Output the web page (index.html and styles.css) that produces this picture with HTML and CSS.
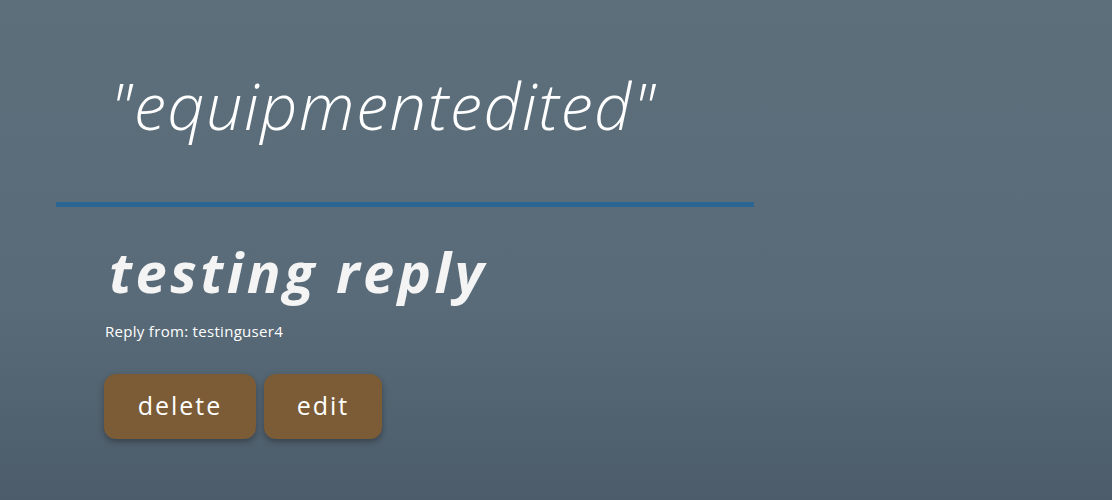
FILE: index.html
```html
<!DOCTYPE html>
<html>
<head>
<meta charset="utf-8">
<link rel="stylesheet" href="styles.css">
</head>
<body>
<main class="page">
  <h1 class="post-title">"equipmentedited"</h1>
  <hr class="divider">
  <section class="reply">
    <h2 class="reply-text">testing reply</h2>
    <p class="reply-meta">Reply from: testinguser4</p>
    <div class="actions">
      <button class="btn btn-delete">delete</button>
      <button class="btn btn-edit">edit</button>
    </div>
  </section>
</main>
</body>
</html>
```
FILE: styles.css
```css
html, body {
  margin: 0;
  height: 100%;
}
body {
  background: linear-gradient(to bottom, #5c6f7b 0%, #596b78 60%, #4c5c6a 100%);
  font-family: "Open Sans", "Liberation Sans", sans-serif;
  color: #fff;
}
.page {
  padding: 60px 0 0 56px;
}
.post-title {
  margin: 0 0 0 54px;
  font-size: 65px;
  font-weight: 300;
  font-style: italic;
  line-height: 90px;
  letter-spacing: 1.5px;
  color: #fff;
}
.divider {
  width: 698px;
  height: 5px;
  border: 0;
  margin: 52px 0 0 0;
  background: #2b6592;
}
.reply {
  padding-left: 48px;
}
.reply-text {
  margin: 28px 0 0 5px;
  font-size: 56px;
  font-weight: 700;
  font-style: italic;
  line-height: 72px;
  letter-spacing: 3.5px;
  color: #f4f4f4;
}
.reply-meta {
  margin: 14px 0 0 1px;
  font-size: 15px;
  line-height: 20px;
  letter-spacing: 0.3px;
  color: #fff;
}
.actions {
  display: flex;
  gap: 8px;
  margin-top: 33px;
}
.btn {
  height: 65px;
  padding: 0 0 4px;
  border: 0;
  border-radius: 12px;
  background: #7b5c37;
  color: #fff;
  font-family: "Open Sans", "Liberation Sans", sans-serif;
  font-size: 25px;
  font-weight: 500;
  letter-spacing: 2px;
  box-shadow: 0 3px 6px rgba(0, 0, 0, 0.3);
}
.btn-delete { width: 152px; }
.btn-edit { width: 118px; }
```
